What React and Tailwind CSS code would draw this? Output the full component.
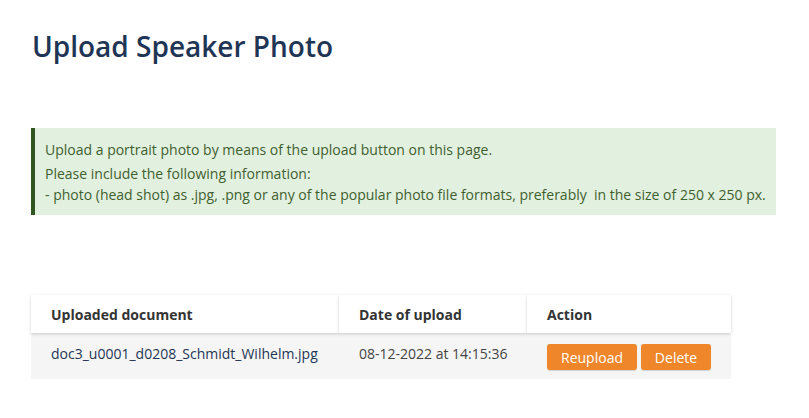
import React from 'react';

const rows = [
  { file: 'doc3_u0001_d0208_Schmidt_Wilhelm.jpg', date: '08-12-2022 at 14:15:36' },
];

export default function App() {
  return (
    <div className="min-h-[418px] bg-white px-[31px] pt-[28px] font-['Open_Sans',sans-serif]">
      <h1 className="pl-[1px] text-[28px] font-semibold leading-[36px] text-[#1f3556]">Upload Speaker Photo</h1>

      {/* Info box */}
      <div className="mt-[64px] w-[745px] border-l-4 border-[#2f5620] bg-[#e2f0df] pl-[10px] pt-[11px] pb-[10px] text-[14px] text-[#3f5f2f]">
        <p className="leading-[21px]">Upload a portrait photo by means of the upload button on this page.</p>
        <p className="mt-[3px] leading-[21px]">Please include the following information:</p>
        <p className="leading-[21px] whitespace-pre">- photo (head shot) as .jpg, .png or any of the popular photo file formats, preferably  in the size of 250 x 250 px.</p>
      </div>

      {/* Uploaded documents */}
      <div className="mt-[80px] w-[700px]">
        <div className="grid grid-cols-[308px_188px_204px] text-[14px] font-bold text-[#333]">
          <div className="h-[38px] flex items-center pl-[20px] bg-white shadow-[0_1px_3px_rgba(0,0,0,0.18)]">Uploaded document</div>
          <div className="h-[38px] flex items-center pl-[20px] bg-white shadow-[0_1px_3px_rgba(0,0,0,0.18)]">Date of upload</div>
          <div className="h-[38px] flex items-center pl-[20px] bg-white shadow-[0_1px_3px_rgba(0,0,0,0.18)]">Action</div>
        </div>
        {rows.map(r => (
          <div key={r.file} className="grid grid-cols-[308px_188px_204px] h-[46px] bg-[#f5f5f5] text-[14px]">
            <div className="pl-[20px] pt-[11px] leading-[20px] text-[#1f3556]">{r.file}</div>
            <div className="pl-[20px] pt-[11px] leading-[20px] text-[#444]">{r.date}</div>
            <div className="pl-[20px] pt-[11px] flex gap-[4px] items-start">
              <button className="h-[26px] w-[90px] rounded-[3px] bg-[#f0862a] text-[14px] text-white shadow-[0_1px_1px_rgba(0,0,0,0.15)]">Reupload</button>
              <button className="h-[26px] w-[70px] rounded-[3px] bg-[#f0862a] text-[14px] text-white shadow-[0_1px_1px_rgba(0,0,0,0.15)]">Delete</button>
            </div>
          </div>
        ))}
      </div>
    </div>
  );
}
